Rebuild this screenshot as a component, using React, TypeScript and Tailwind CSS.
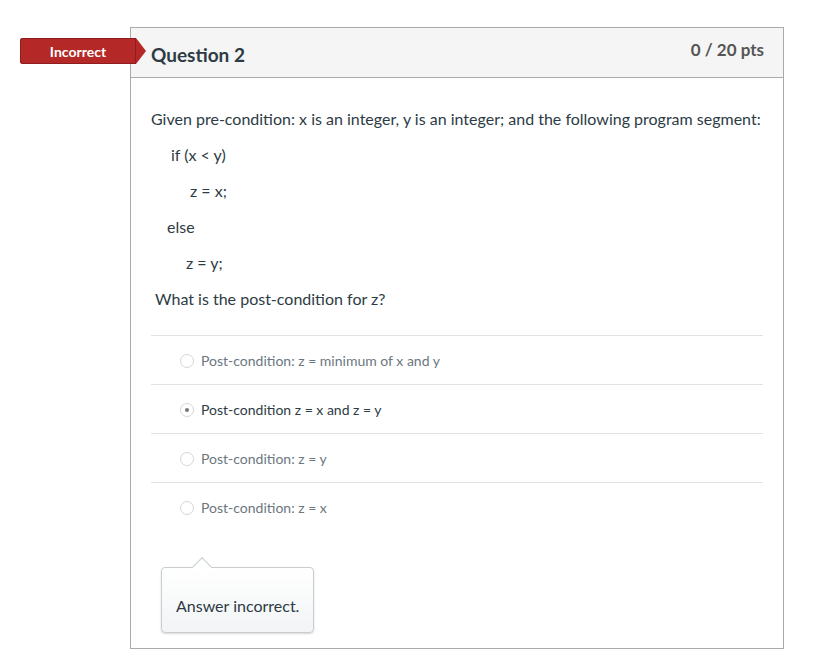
import React from 'react';

const answers = [
  { text: 'Post-condition: z = minimum of x and y', selected: false },
  { text: 'Post-condition z = x and z = y', selected: true },
  { text: 'Post-condition: z = y', selected: false },
  { text: 'Post-condition: z = x', selected: false },
];

function Radio({ checked }: { checked: boolean }) {
  return (
    <span className="flex h-[14px] w-[14px] shrink-0 items-center justify-center rounded-full border border-[#d6d6d6] bg-white">
      {checked && <span className="h-[4px] w-[4px] rounded-full bg-[#777]" />}
    </span>
  );
}

export default function App() {
  return (
    <div
      className="relative min-h-[672px] w-[819px] bg-white text-[#2d3b45]"
      style={{ fontFamily: 'Lato, "Liberation Sans", sans-serif' }}
    >
      {/* incorrect badge, sits over the card edge */}
      <div className="absolute left-[20px] top-[38px] z-10 flex h-[26px] items-center">
        <div className="flex h-[26px] w-[116px] items-center justify-center rounded-l-[3px] bg-[#b52828] text-[14px] font-bold text-white shadow-[inset_0_0_0_1px_#8f1d1d]">
          Incorrect
        </div>
        <div className="h-0 w-0 border-y-[13px] border-l-[10px] border-y-transparent border-l-[#b52828]" />
      </div>

      <div className="pl-[130px] pt-[27px]">
        <div className="w-[654px] border border-[#aaaaaa]">
          {/* header */}
          <div className="flex h-[50px] items-start justify-between border-b border-[#aaaaaa] bg-[#f5f5f5] pl-[20px] pr-[19px]">
            <h2 className="pt-[15px] text-[19px] font-bold leading-[24px] text-[#2d3b45]">Question 2</h2>
            <div className="pt-[10px] text-[17px] font-bold leading-[24px] text-[#555]">0 / 20 pts</div>
          </div>

          {/* body */}
          <div className="px-[20px] pb-[15px] pt-[29px] text-[16px] leading-[24px]">
            <p className="mb-[12px]">
              Given pre-condition: x is an integer, y is an integer; and the following program segment:
            </p>
            <p className="mb-[12px] pl-[20px]">if (x &lt; y)</p>
            <p className="mb-[12px] pl-[39px]">z = x;</p>
            <p className="mb-[12px] pl-[16px]">else</p>
            <p className="mb-[12px] pl-[35px]">z = y;</p>
            <p className="pl-[4px]">What is the post-condition for z?</p>

            <div className="mt-[24px]">
              {answers.map((a, i) => (
                <div
                  key={i}
                  className="flex h-[49px] items-center gap-[7px] border-t border-[#e2e2e2] pl-[29px] pt-[2px] text-[14px]"
                >
                  <Radio checked={a.selected} />
                  <span className={a.selected ? 'text-[#2d3b45]' : 'text-[#6b7780]'}>{a.text}</span>
                </div>
              ))}
            </div>

            {/* feedback bubble */}
            <div className="relative ml-[10px] mt-[36px] w-[153px]">
              <div className="absolute left-[34px] top-[-7px] h-[14px] w-[14px] rotate-45 border-l border-t border-[#c7cdd1] bg-white" />
              <div className="flex h-[66px] items-center rounded-[4px] border border-[#c7cdd1] bg-gradient-to-b from-white to-[#f2f4f5] pl-[14px] pt-[12px] text-[16px] shadow-[0_1px_2px_rgba(0,0,0,0.15)]">
                Answer incorrect.
              </div>
            </div>
          </div>
        </div>
      </div>
    </div>
  );
}
